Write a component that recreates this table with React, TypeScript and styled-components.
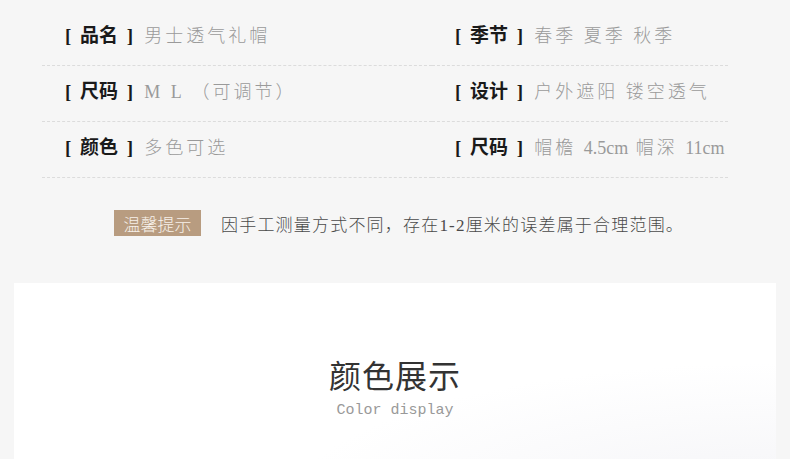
import styled, { createGlobalStyle } from "styled-components"

const GlobalStyle = createGlobalStyle`
  html, body {
    margin: 0;
    padding: 0;
    background: #f6f6f6;
  }
  * {
    box-sizing: border-box;
  }
`

type Spec = {
  label: string
  value: string
}

const specs: Spec[] = [
  { label: '品名', value: '男士透气礼帽' },
  { label: '季节', value: '春季 夏季 秋季' },
  { label: '尺码', value: 'M L （可调节）' },
  { label: '设计', value: '户外遮阳 镂空透气' },
  { label: '颜色', value: '多色可选' },
  { label: '尺码', value: '帽檐 4.5cm 帽深 11cm' },
]

// latin runs get a tighter spacing than the cjk characters
const renderValue = (v: string) =>
  v.split(/([0-9.]+[a-z]*)/).map((part, i) =>
    i % 2 === 1 ? <Latin key={i}>{part}</Latin> : part
  )

export default function App() {
  return (
    <Page>
      <GlobalStyle />
      <SpecTable>
        {specs.map((s, i) => (
          <SpecCell key={i}>
            <Label>[ {s.label} ]</Label>
            <Value>{renderValue(s.value)}</Value>
          </SpecCell>
        ))}
      </SpecTable>
      <Tip>
        <TipBadge>温馨提示</TipBadge>
        <TipText>因手工测量方式不同，存在1-2厘米的误差属于合理范围。</TipText>
      </Tip>
      <Card>
        <Title>颜色展示</Title>
        <Subtitle>Color display</Subtitle>
      </Card>
    </Page>
  )
}

const Page = styled.div`
  width: 790px;
  height: 459px;
  overflow: hidden;
  padding-top: 10px;
  background: #f6f6f6;
  font-family: "Liberation Serif", "Noto Sans CJK SC", serif;
`

const SpecTable = styled.div`
  display: grid;
  grid-template-columns: 390px 296px;
  margin-left: 42px;
`

const SpecCell = styled.div`
  height: 56px;
  display: flex;
  align-items: center;
  padding-left: 23px;
  padding-bottom: 8px;
  border-bottom: 1px dashed #dcdcdc;
`

const Label = styled.span`
  font-family: "Liberation Serif", "Noto Sans CJK SC", serif;
  font-size: 19px;
  font-weight: 700;
  color: #1a1a1a;
  white-space: pre;
  word-spacing: 4px;
  margin-right: 11px;
`

const Value = styled.span`
  font-family: "Liberation Serif", "Noto Sans CJK SC", serif;
  font-size: 18px;
  letter-spacing: 3px;
  color: #9a9a9a;
  white-space: pre;
  font-weight: 300;
`

const Latin = styled.span`
  letter-spacing: 0;
`

const Tip = styled.div`
  display: flex;
  align-items: center;
  margin: 32px 0 0 114px;
  gap: 20px;
`

const TipBadge = styled.span`
  height: 26px;
  width: 87px;
  display: flex;
  align-items: center;
  justify-content: center;
  background: #b89c80;
  color: #f7f1ea;
  font-size: 17px;
  font-family: "Noto Sans CJK SC", sans-serif;
  font-weight: 300;
`

const TipText = styled.span`
  font-family: "Liberation Serif", "Noto Sans CJK SC", serif;
  font-size: 17px;
  letter-spacing: 1.2px;
  color: #4a4a4a;
  font-weight: 300;
`

const Card = styled.div`
  margin: 47px 14px 0 14px;
  height: 220px;
  background: radial-gradient(ellipse at 100% 100%, #f4f4f7 0%, #ffffff 45%);
  display: flex;
  flex-direction: column;
  align-items: center;
  padding-top: 71px;
`

const Title = styled.div`
  font-family: "Noto Sans CJK SC", serif;
  font-size: 32px;
  letter-spacing: 1px;
  color: #333;
  line-height: 40px;
`

const Subtitle = styled.div`
  font-family: "Liberation Mono", monospace;
  font-size: 15px;
  color: #999;
  margin-top: 8px;
`
